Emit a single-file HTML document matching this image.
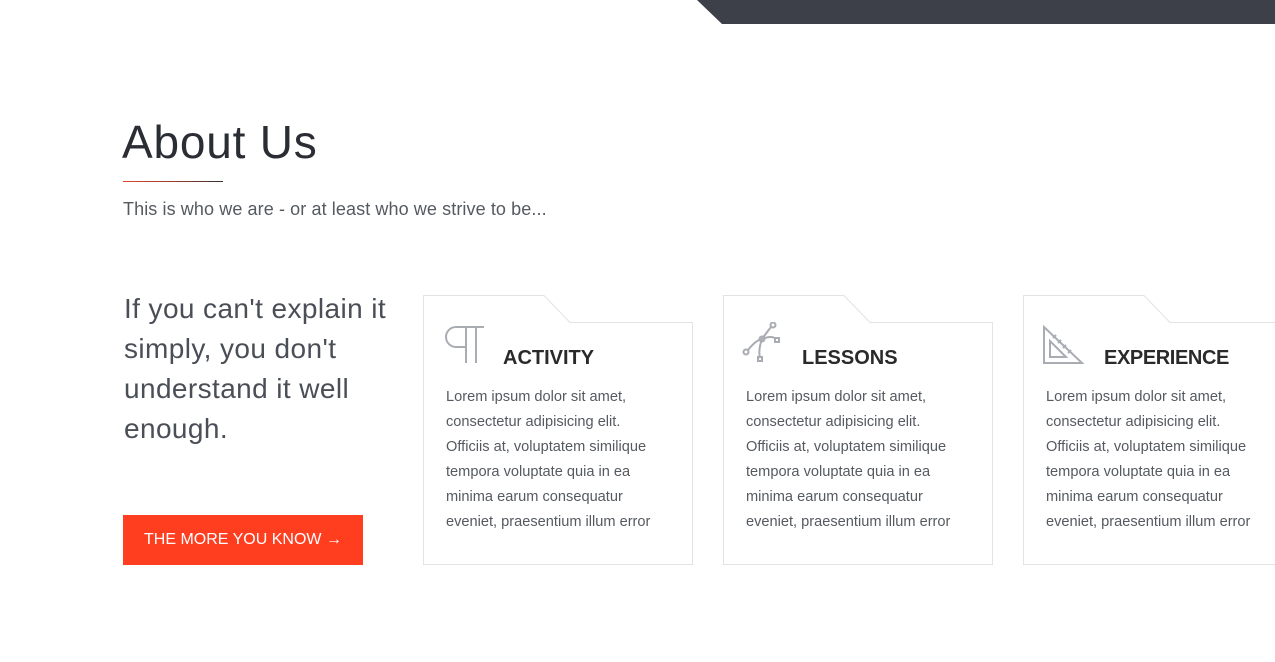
<!DOCTYPE html>
<html><head><meta charset="utf-8"><style>
body{margin:0;width:1275px;height:662px;background:#fff;position:relative;overflow:hidden;font-family:"Liberation Sans",sans-serif}
.a{position:absolute}
h1{position:absolute;left:122px;top:115px;margin:0;font-size:46px;font-weight:400;color:#2a2d33;letter-spacing:0.8px}
.card{position:absolute;top:295px;width:270px;height:270px}
.card svg.b{position:absolute;left:0;top:0}
.card h3{position:absolute;top:52px;margin:0;font-size:20px;font-weight:700;color:#2a2a2a}
.card p{position:absolute;left:23px;top:90px;margin:0;font-size:14.6px;line-height:25px;color:#555a60;white-space:nowrap}
</style></head><body>
<svg class="a" style="left:0;top:0" width="1275" height="25"><polygon points="697,0 1275,0 1275,24 722,24" fill="#3d4049"/></svg>
<h1>About Us</h1>
<div class="a" style="left:123px;top:181px;width:100px;height:1px;background:linear-gradient(90deg,#e0452c,#8a3a30 60%,#333)"></div>
<div class="a" style="left:123px;top:199px;font-size:18px;color:#555a60;letter-spacing:0.1px">This is who we are - or at least who we strive to be...</div>
<div class="a" style="left:124px;top:289px;font-size:28px;line-height:40px;color:#4a4f57;letter-spacing:0.4px;white-space:nowrap">If you can't explain it<br>simply, you don't<br>understand it well<br>enough.</div>
<div class="a" style="left:123px;top:515px;width:240px;height:50px;background:#ff3d1f;color:#fff;font-size:16px;line-height:50px;text-indent:21px">THE MORE YOU KNOW <span style="font-size:16px">&#8594;</span></div>

<div class="card" style="left:423px">
<svg class="b" width="272" height="272"><path d="M0.5,269.5 V0.5 H121 L147,27.5 H269.5 V269.5 Z" fill="none" stroke="#e3e3e3"/></svg>
<svg class="a" style="left:19px;top:30px" width="44" height="40"><path d="M18,2 H42 M24,2 V38 M34,2 V38 M24,22 H14 A10,10 0 0 1 14,2 H18" fill="none" stroke="#a9adb3" stroke-width="2"/></svg>
<h3 style="left:80px">ACTIVITY</h3>
<p>Lorem ipsum dolor sit amet,<br>consectetur adipisicing elit.<br>Officiis at, voluptatem similique<br>tempora voluptate quia in ea<br>minima earum consequatur<br>eveniet, praesentium illum error</p>
</div>

<div class="card" style="left:723px">
<svg class="b" width="272" height="272"><path d="M0.5,269.5 V0.5 H121 L147,27.5 H269.5 V269.5 Z" fill="none" stroke="#e3e3e3"/></svg>
<svg class="a" style="left:19px;top:27px" width="44" height="44"><g fill="none" stroke="#a9adb3" stroke-width="2"><path d="M6,28 Q14,18 20,17 M20,17 Q28,6 30,4 M20,17 Q30,13 34,17 M20,17 Q16,28 18,36"/><circle cx="4" cy="30" r="2.5"/><circle cx="20" cy="17" r="2.5"/><circle cx="31" cy="3" r="2.5"/><rect x="33" y="16" width="4" height="4"/><rect x="16" y="35" width="4" height="4"/></g></svg>
<h3 style="left:79px">LESSONS</h3>
<p>Lorem ipsum dolor sit amet,<br>consectetur adipisicing elit.<br>Officiis at, voluptatem similique<br>tempora voluptate quia in ea<br>minima earum consequatur<br>eveniet, praesentium illum error</p>
</div>

<div class="card" style="left:1023px">
<svg class="b" width="272" height="272"><path d="M0.5,269.5 V0.5 H121 L147,27.5 H269.5 V269.5 Z" fill="none" stroke="#e3e3e3"/></svg>
<svg class="a" style="left:19px;top:30px" width="44" height="40"><g fill="none" stroke="#a9adb3" stroke-width="2"><path d="M2,2 V38 H40 Z"/><path d="M8,16 V32 H24 Z"/><path d="M14,10 l-3,3 M19,15 l-3,3 M24,20 l-3,3 M29,25 l-3,3"/></g></svg>
<h3 style="left:81px;letter-spacing:-0.4px">EXPERIENCE</h3>
<p>Lorem ipsum dolor sit amet,<br>consectetur adipisicing elit.<br>Officiis at, voluptatem similique<br>tempora voluptate quia in ea<br>minima earum consequatur<br>eveniet, praesentium illum error</p>
</div>
</body></html>
